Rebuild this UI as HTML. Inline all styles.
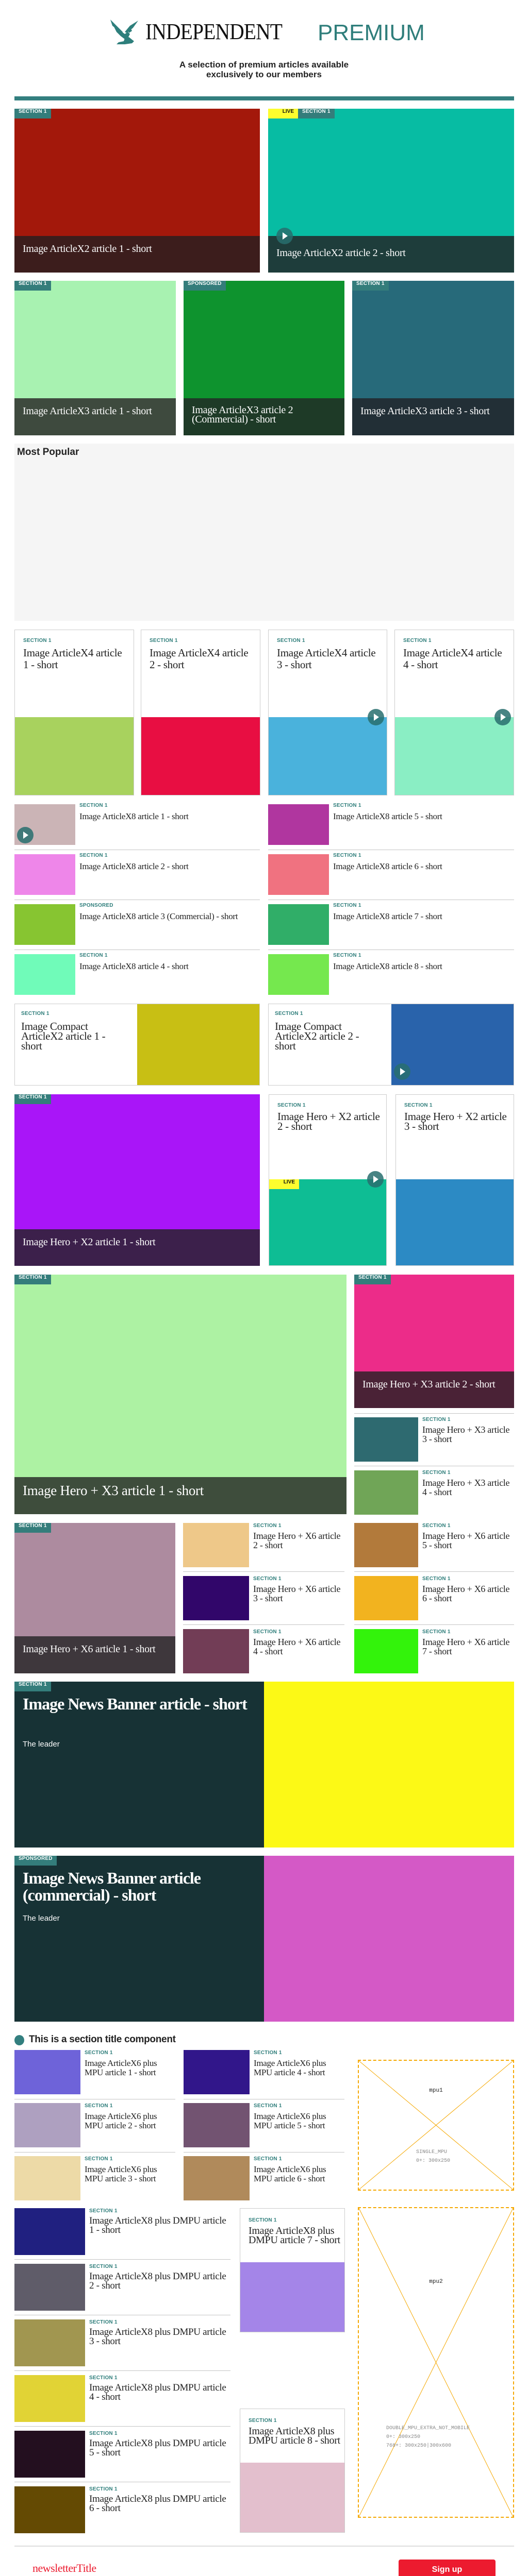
<!DOCTYPE html>
<html><head><meta charset="utf-8">
<style>
*{margin:0;padding:0;box-sizing:border-box}
html{width:1024px;height:5128px;overflow:hidden}
body{width:1024px;height:5128px;position:relative;background:#fff;overflow:hidden;font-family:"Liberation Serif",serif}
.a{position:absolute}
.chip{position:absolute;left:0;top:0;height:19px;line-height:19px;padding:0 8px;background:#347d7b;color:#fff;font:bold 10px "Liberation Sans Narrow","Liberation Sans",sans-serif;letter-spacing:.2px}
.live{position:absolute;left:0;top:0;height:19px;line-height:19px;width:58px;padding-right:8px;text-align:right;background:#fdfd2e;color:#111;font:bold 10px "Liberation Sans Narrow","Liberation Sans",sans-serif}
.cap{position:absolute;left:0;right:0;bottom:0;color:#fff;font-size:20px;line-height:22px;padding:14px 16px;letter-spacing:-.3px;overflow:hidden}
.lbl{color:#2f7e7b;font:bold 10px "Liberation Sans Narrow","Liberation Sans",sans-serif;letter-spacing:.2px}
.t{color:#222;letter-spacing:-.3px}
.bx{border:1px solid #ccc;background:#fff;overflow:hidden}
.sep{position:absolute;height:1px;background:#c4c4c4}
.play{position:absolute;width:32px;height:32px;border-radius:50%;background:rgba(40,110,110,.85)}
.play:after{content:"";position:absolute;left:12px;top:9px;border-left:10px solid #fff;border-top:7px solid transparent;border-bottom:7px solid transparent}
.mono{font-family:"Liberation Mono",monospace;color:#888;font-size:10px}
</style></head><body>

<!-- header -->
<svg class="a" style="left:212px;top:36px" width="58" height="52" viewBox="0 0 58 52">
<g fill="#2e7f7c">
<path d="M2 2 L18 18 L26 26 L24 30 L16 22 L6 14 Z"/>
<path d="M56 4 L46 18 L34 28 L30 26 L40 14 Z"/>
<path d="M6 10 L22 24 L30 30 L36 26 L40 30 L36 38 L30 40 L22 34 L14 26 Z"/>
<path d="M30 38 L38 36 L48 44 L44 48 L30 50 L14 50 L18 46 L28 44 Z"/>
<path d="M36 22 L42 20 L44 24 L38 28 Z"/>
</g></svg>
<div class="a" style="left:282px;top:37px;font-size:44px;line-height:50px;color:#111;transform:scaleX(.9);transform-origin:left;letter-spacing:-1px">INDEPENDENT</div>
<div class="a" style="left:616px;top:39px;font:44px/50px 'Liberation Sans Narrow','Liberation Sans',sans-serif;color:#2f7e7b">PREMIUM</div>
<div class="a" style="left:0;width:1024px;top:116px;text-align:center;font:bold 17px/19px 'Liberation Sans Narrow','Liberation Sans',sans-serif;color:#222">A selection of premium articles available<br>exclusively to our members</div>
<div class="a" style="left:28px;top:187px;width:969px;height:8px;background:#337f7f"></div>

<!-- row1 X2 -->
<div class="a" style="left:28px;top:211px;width:476px;height:318px;background:#a3180b"><div class="chip">SECTION 1</div><div class="cap" style="top:247px;background:#3c1d1c">Image ArticleX2 article 1 - short</div></div>
<div class="a" style="left:520px;top:211px;width:477px;height:318px;background:#07bca3"><div class="live">LIVE</div><div class="chip" style="left:58px">SECTION 1</div><div class="cap" style="top:247px;background:#1e3d3b;padding-top:22px">Image ArticleX2 article 2 - short</div><div class="play" style="left:16px;top:231px"></div></div>

<!-- row2 X3 -->
<div class="a" style="left:28px;top:545px;width:313px;height:300px;background:#a8f2b1"><div class="chip">SECTION 1</div><div class="cap" style="top:228px;background:#3e4a3e">Image ArticleX3 article 1 - short</div></div>
<div class="a" style="left:356px;top:545px;width:312px;height:300px;background:#0e932e"><div class="chip">SPONSORED</div><div class="cap" style="top:228px;background:#1e3a27;line-height:18px">Image ArticleX3 article 2 (Commercial) - short</div></div>
<div class="a" style="left:683px;top:545px;width:314px;height:300px;background:#276a7a"><div class="chip">SECTION 1</div><div class="cap" style="top:228px;background:#222f36">Image ArticleX3 article 3 - short</div></div>

<!-- most popular -->
<div class="a" style="left:28px;top:861px;width:969px;height:344px;background:#f5f5f5"><div class="a" style="left:5px;top:5px;font:bold 19px/24px 'Liberation Sans',sans-serif;color:#222">Most Popular</div></div>

<!-- X4 -->
<div class="a bx" style="left:28px;top:1222px;width:232px;height:322px"><div class="a lbl" style="left:16px;top:15px">SECTION 1</div><div class="a t" style="left:16px;top:33px;font-size:21px;line-height:23px;width:200px">Image ArticleX4 article 1 - short</div><div class="a" style="left:0;right:0;top:169px;bottom:0;background:#a8d25e"></div></div>
<div class="a bx" style="left:273px;top:1222px;width:232px;height:322px"><div class="a lbl" style="left:16px;top:15px">SECTION 1</div><div class="a t" style="left:16px;top:33px;font-size:21px;line-height:23px;width:200px">Image ArticleX4 article 2 - short</div><div class="a" style="left:0;right:0;top:169px;bottom:0;background:#e80e42"></div></div>
<div class="a bx" style="left:520px;top:1222px;width:231px;height:322px;overflow:visible"><div class="a lbl" style="left:16px;top:15px">SECTION 1</div><div class="a t" style="left:16px;top:33px;font-size:21px;line-height:23px;width:200px">Image ArticleX4 article 3 - short</div><div class="a" style="left:0;right:0;top:169px;bottom:0;background:#4ab2dc"></div><div class="play" style="left:192px;top:153px"></div></div>
<div class="a bx" style="left:765px;top:1222px;width:232px;height:322px;overflow:visible"><div class="a lbl" style="left:16px;top:15px">SECTION 1</div><div class="a t" style="left:16px;top:33px;font-size:21px;line-height:23px;width:200px">Image ArticleX4 article 4 - short</div><div class="a" style="left:0;right:0;top:169px;bottom:0;background:#8aeec4"></div><div class="play" style="left:193px;top:153px"></div></div>

<!-- X8 -->
<div class="a" style="left:28px;top:1561px;width:118px;height:79px;background:#cbb4b6"><div class="play" style="left:5px;top:44px"></div></div>
<div class="a lbl" style="left:154px;top:1558px">SECTION 1</div><div class="a t" style="left:154px;top:1575px;font-size:17px;line-height:19px;width:330px">Image ArticleX8 article 1 - short</div>
<div class="sep" style="left:28px;top:1649px;width:476px"></div>
<div class="a" style="left:28px;top:1658px;width:118px;height:79px;background:#ee86e9"></div>
<div class="a lbl" style="left:154px;top:1655px">SECTION 1</div><div class="a t" style="left:154px;top:1672px;font-size:17px;line-height:19px;width:330px">Image ArticleX8 article 2 - short</div>
<div class="sep" style="left:28px;top:1746px;width:476px"></div>
<div class="a" style="left:28px;top:1755px;width:118px;height:79px;background:#87c531"></div>
<div class="a lbl" style="left:154px;top:1752px">SPONSORED</div><div class="a t" style="left:154px;top:1769px;font-size:17px;line-height:19px;width:330px">Image ArticleX8 article 3 (Commercial) - short</div>
<div class="sep" style="left:28px;top:1843px;width:476px"></div>
<div class="a" style="left:28px;top:1852px;width:118px;height:79px;background:#70fbb9"></div>
<div class="a lbl" style="left:154px;top:1849px">SECTION 1</div><div class="a t" style="left:154px;top:1866px;font-size:17px;line-height:19px;width:330px">Image ArticleX8 article 4 - short</div>

<div class="a" style="left:520px;top:1561px;width:118px;height:79px;background:#b0369f"></div>
<div class="a lbl" style="left:646px;top:1558px">SECTION 1</div><div class="a t" style="left:646px;top:1575px;font-size:17px;line-height:19px;width:330px">Image ArticleX8 article 5 - short</div>
<div class="sep" style="left:520px;top:1649px;width:477px"></div>
<div class="a" style="left:520px;top:1658px;width:118px;height:79px;background:#f07280"></div>
<div class="a lbl" style="left:646px;top:1655px">SECTION 1</div><div class="a t" style="left:646px;top:1672px;font-size:17px;line-height:19px;width:330px">Image ArticleX8 article 6 - short</div>
<div class="sep" style="left:520px;top:1746px;width:477px"></div>
<div class="a" style="left:520px;top:1755px;width:118px;height:79px;background:#30ae68"></div>
<div class="a lbl" style="left:646px;top:1752px">SECTION 1</div><div class="a t" style="left:646px;top:1769px;font-size:17px;line-height:19px;width:330px">Image ArticleX8 article 7 - short</div>
<div class="sep" style="left:520px;top:1843px;width:477px"></div>
<div class="a" style="left:520px;top:1852px;width:118px;height:79px;background:#75e84e"></div>
<div class="a lbl" style="left:646px;top:1849px">SECTION 1</div><div class="a t" style="left:646px;top:1866px;font-size:17px;line-height:19px;width:330px">Image ArticleX8 article 8 - short</div>

<!-- compact -->
<div class="a bx" style="left:28px;top:1948px;width:476px;height:159px"><div class="a lbl" style="left:12px;top:13px">SECTION 1</div><div class="a t" style="left:12px;top:34px;font-size:21px;line-height:19px;width:200px">Image Compact ArticleX2 article 1 - short</div><div class="a" style="left:237px;right:0;top:0;bottom:0;background:#c8bf14"></div></div>
<div class="a bx" style="left:520px;top:1948px;width:477px;height:159px"><div class="a lbl" style="left:12px;top:13px">SECTION 1</div><div class="a t" style="left:12px;top:34px;font-size:21px;line-height:19px;width:200px">Image Compact ArticleX2 article 2 - short</div><div class="a" style="left:238px;right:0;top:0;bottom:0;background:#2963ab"></div><div class="play" style="left:243px;top:115px"></div></div>

<!-- hero X2 -->
<div class="a" style="left:28px;top:2124px;width:476px;height:333px;background:#a915f8"><div class="chip">SECTION 1</div><div class="cap" style="top:262px;background:#3c204b">Image Hero + X2 article 1 - short</div></div>
<div class="a bx" style="left:521px;top:2124px;width:229px;height:333px;overflow:visible"><div class="a lbl" style="left:16px;top:15px">SECTION 1</div><div class="a t" style="left:16px;top:33px;font-size:21px;line-height:19px;width:205px">Image Hero + X2 article 2 - short</div><div class="a" style="left:0;right:0;top:164px;bottom:0;background:#0ebd94"><div class="live" style="width:58px">LIVE</div></div><div class="play" style="left:190px;top:148px"></div></div>
<div class="a bx" style="left:767px;top:2124px;width:230px;height:333px"><div class="a lbl" style="left:16px;top:15px">SECTION 1</div><div class="a t" style="left:16px;top:33px;font-size:21px;line-height:19px;width:205px">Image Hero + X2 article 3 - short</div><div class="a" style="left:0;right:0;top:164px;bottom:0;background:#2c8ac4"></div></div>

<!-- hero X3 -->
<div class="a" style="left:28px;top:2474px;width:644px;height:465px;background:#adf2a3"><div class="chip">SECTION 1</div><div class="cap" style="top:393px;background:#3e4d3c;font-size:27px;line-height:30px;padding-top:11px">Image Hero + X3 article 1 - short</div></div>
<div class="a" style="left:687px;top:2474px;width:310px;height:259px;background:#ec2c89"><div class="chip">SECTION 1</div><div class="cap" style="top:188px;background:#4a2236">Image Hero + X3 article 2 - short</div></div>
<div class="sep" style="left:687px;top:2743px;width:310px"></div>
<div class="a" style="left:687px;top:2751px;width:124px;height:86px;background:#2e6a70"></div>
<div class="a lbl" style="left:819px;top:2750px">SECTION 1</div><div class="a t" style="left:819px;top:2766px;font-size:18px;line-height:18px;width:178px">Image Hero + X3 article 3 - short</div>
<div class="sep" style="left:687px;top:2845px;width:310px"></div>
<div class="a" style="left:687px;top:2854px;width:124px;height:86px;background:#70a557"></div>
<div class="a lbl" style="left:819px;top:2853px">SECTION 1</div><div class="a t" style="left:819px;top:2869px;font-size:18px;line-height:18px;width:178px">Image Hero + X3 article 4 - short</div>

<!-- X6 -->
<div class="a" style="left:28px;top:2956px;width:312px;height:292px;background:#ad8b9f"><div class="chip">SECTION 1</div><div class="cap" style="top:220px;background:#3e373c">Image Hero + X6 article 1 - short</div></div>
<div class="a" style="left:355px;top:2956px;width:128px;height:86px;background:#eec889"></div>
<div class="a lbl" style="left:491px;top:2956px">SECTION 1</div><div class="a t" style="left:491px;top:2972px;font-size:18px;line-height:18px;width:178px">Image Hero + X6 article 2 - short</div>
<div class="sep" style="left:355px;top:3050px;width:313px"></div>
<div class="a" style="left:355px;top:3059px;width:128px;height:86px;background:#31066a"></div>
<div class="a lbl" style="left:491px;top:3059px">SECTION 1</div><div class="a t" style="left:491px;top:3075px;font-size:18px;line-height:18px;width:178px">Image Hero + X6 article 3 - short</div>
<div class="sep" style="left:355px;top:3153px;width:313px"></div>
<div class="a" style="left:355px;top:3162px;width:128px;height:86px;background:#723d56"></div>
<div class="a lbl" style="left:491px;top:3162px">SECTION 1</div><div class="a t" style="left:491px;top:3178px;font-size:18px;line-height:18px;width:178px">Image Hero + X6 article 4 - short</div>

<div class="a" style="left:687px;top:2956px;width:124px;height:86px;background:#b27a3b"></div>
<div class="a lbl" style="left:819px;top:2956px">SECTION 1</div><div class="a t" style="left:819px;top:2972px;font-size:18px;line-height:18px;width:178px">Image Hero + X6 article 5 - short</div>
<div class="sep" style="left:687px;top:3050px;width:310px"></div>
<div class="a" style="left:687px;top:3059px;width:124px;height:86px;background:#f2b31f"></div>
<div class="a lbl" style="left:819px;top:3059px">SECTION 1</div><div class="a t" style="left:819px;top:3075px;font-size:18px;line-height:18px;width:178px">Image Hero + X6 article 6 - short</div>
<div class="sep" style="left:687px;top:3153px;width:310px"></div>
<div class="a" style="left:687px;top:3162px;width:124px;height:86px;background:#33f30b"></div>
<div class="a lbl" style="left:819px;top:3162px">SECTION 1</div><div class="a t" style="left:819px;top:3178px;font-size:18px;line-height:18px;width:178px">Image Hero + X6 article 7 - short</div>

<!-- news banners -->
<div class="a" style="left:28px;top:3264px;width:484px;height:322px;background:#173235"><div class="chip">SECTION 1</div><div class="a" style="left:16px;top:27px;width:440px;color:#fff;font:bold 32px/33px 'Liberation Serif',serif;letter-spacing:-1px">Image News Banner article - short</div><div class="a" style="left:16px;top:113px;color:#fff;font:15px 'Liberation Sans Narrow','Liberation Sans',sans-serif">The leader</div></div>
<div class="a" style="left:512px;top:3264px;width:485px;height:322px;background:#fcf916"></div>
<div class="a" style="left:28px;top:3602px;width:484px;height:322px;background:#173235"><div class="chip">SPONSORED</div><div class="a" style="left:16px;top:27px;width:440px;color:#fff;font:bold 32px/33px 'Liberation Serif',serif;letter-spacing:-1px">Image News Banner article (commercial) - short</div><div class="a" style="left:16px;top:113px;color:#fff;font:15px 'Liberation Sans Narrow','Liberation Sans',sans-serif">The leader</div></div>
<div class="a" style="left:512px;top:3602px;width:485px;height:322px;background:#d459c6"></div>

<!-- section title -->
<div class="a" style="left:28px;top:3950px;width:19px;height:20px;border-radius:50%;background:#337f7f"></div>
<div class="a" style="left:56px;top:3947px;font:bold 19px/24px 'Liberation Sans Narrow','Liberation Sans',sans-serif;color:#222;letter-spacing:-.3px">This is a section title component</div>

<!-- X6 + MPU -->
<div class="a" style="left:28px;top:3979px;width:128px;height:86px;background:#6e63d9"></div>
<div class="a lbl" style="left:164px;top:3979px">SECTION 1</div><div class="a t" style="left:164px;top:3996px;font-size:17px;line-height:18px;width:170px">Image ArticleX6 plus MPU article 1 - short</div>
<div class="sep" style="left:28px;top:4074px;width:312px"></div>
<div class="a" style="left:28px;top:4082px;width:128px;height:86px;background:#aea0c0"></div>
<div class="a lbl" style="left:164px;top:4082px">SECTION 1</div><div class="a t" style="left:164px;top:4099px;font-size:17px;line-height:18px;width:170px">Image ArticleX6 plus MPU article 2 - short</div>
<div class="sep" style="left:28px;top:4177px;width:312px"></div>
<div class="a" style="left:28px;top:4185px;width:128px;height:86px;background:#eddaa7"></div>
<div class="a lbl" style="left:164px;top:4185px">SECTION 1</div><div class="a t" style="left:164px;top:4202px;font-size:17px;line-height:18px;width:170px">Image ArticleX6 plus MPU article 3 - short</div>

<div class="a" style="left:356px;top:3979px;width:128px;height:86px;background:#31168a"></div>
<div class="a lbl" style="left:492px;top:3979px">SECTION 1</div><div class="a t" style="left:492px;top:3996px;font-size:17px;line-height:18px;width:170px">Image ArticleX6 plus MPU article 4 - short</div>
<div class="sep" style="left:356px;top:4074px;width:312px"></div>
<div class="a" style="left:356px;top:4082px;width:128px;height:86px;background:#725371"></div>
<div class="a lbl" style="left:492px;top:4082px">SECTION 1</div><div class="a t" style="left:492px;top:4099px;font-size:17px;line-height:18px;width:170px">Image ArticleX6 plus MPU article 5 - short</div>
<div class="sep" style="left:356px;top:4177px;width:312px"></div>
<div class="a" style="left:356px;top:4185px;width:128px;height:86px;background:#b08a5b"></div>
<div class="a lbl" style="left:492px;top:4185px">SECTION 1</div><div class="a t" style="left:492px;top:4202px;font-size:17px;line-height:18px;width:170px">Image ArticleX6 plus MPU article 6 - short</div>

<div class="a" style="left:694px;top:3998px;width:303px;height:254px;border:2px dashed #f5a800;overflow:hidden">
<svg class="a" style="left:0;top:0" width="299" height="250"><line x1="0" y1="0" x2="299" y2="250" stroke="#f5a800" stroke-width="1"/><line x1="299" y1="0" x2="0" y2="250" stroke="#f5a800" stroke-width="1"/></svg>
<div class="a mono" style="left:0;width:299px;top:52px;text-align:center;color:#222;font-size:11px">mpu1</div>
<div class="a mono" style="left:111px;top:169px;line-height:17px">SINGLE_MPU<br>0+: 300x250</div>
</div>

<!-- DMPU -->
<div class="a" style="left:28px;top:4286px;width:137px;height:91px;background:#202080"></div>
<div class="a lbl" style="left:173px;top:4286px">SECTION 1</div><div class="a t" style="left:173px;top:4302px;font-size:19px;line-height:18px;width:270px">Image ArticleX8 plus DMPU article 1 - short</div>
<div class="sep" style="left:28px;top:4385px;width:419px"></div>
<div class="a" style="left:28px;top:4394px;width:137px;height:91px;background:#5f5c69"></div>
<div class="a lbl" style="left:173px;top:4394px">SECTION 1</div><div class="a t" style="left:173px;top:4410px;font-size:19px;line-height:18px;width:270px">Image ArticleX8 plus DMPU article 2 - short</div>
<div class="sep" style="left:28px;top:4493px;width:419px"></div>
<div class="a" style="left:28px;top:4502px;width:137px;height:91px;background:#a19650"></div>
<div class="a lbl" style="left:173px;top:4502px">SECTION 1</div><div class="a t" style="left:173px;top:4518px;font-size:19px;line-height:18px;width:270px">Image ArticleX8 plus DMPU article 3 - short</div>
<div class="sep" style="left:28px;top:4601px;width:419px"></div>
<div class="a" style="left:28px;top:4610px;width:137px;height:91px;background:#e1d335"></div>
<div class="a lbl" style="left:173px;top:4610px">SECTION 1</div><div class="a t" style="left:173px;top:4626px;font-size:19px;line-height:18px;width:270px">Image ArticleX8 plus DMPU article 4 - short</div>
<div class="sep" style="left:28px;top:4709px;width:419px"></div>
<div class="a" style="left:28px;top:4718px;width:137px;height:91px;background:#230f1f"></div>
<div class="a lbl" style="left:173px;top:4718px">SECTION 1</div><div class="a t" style="left:173px;top:4734px;font-size:19px;line-height:18px;width:270px">Image ArticleX8 plus DMPU article 5 - short</div>
<div class="sep" style="left:28px;top:4817px;width:419px"></div>
<div class="a" style="left:28px;top:4826px;width:137px;height:91px;background:#644a03"></div>
<div class="a lbl" style="left:173px;top:4826px">SECTION 1</div><div class="a t" style="left:173px;top:4842px;font-size:19px;line-height:18px;width:270px">Image ArticleX8 plus DMPU article 6 - short</div>

<div class="a bx" style="left:465px;top:4286px;width:204px;height:241px"><div class="a lbl" style="left:16px;top:17px">SECTION 1</div><div class="a t" style="left:16px;top:34px;font-size:20px;line-height:18px;width:180px">Image ArticleX8 plus DMPU article 7 - short</div><div class="a" style="left:0;right:0;top:104px;bottom:0;background:#a485e8"></div></div>
<div class="a bx" style="left:465px;top:4675px;width:204px;height:241px"><div class="a lbl" style="left:16px;top:17px">SECTION 1</div><div class="a t" style="left:16px;top:34px;font-size:20px;line-height:18px;width:180px">Image ArticleX8 plus DMPU article 8 - short</div><div class="a" style="left:0;right:0;top:104px;bottom:0;background:#e3bfcd"></div></div>

<div class="a" style="left:694px;top:4284px;width:303px;height:603px;border:2px dashed #f5a800;overflow:hidden">
<svg class="a" style="left:0;top:0" width="299" height="599"><line x1="0" y1="0" x2="299" y2="599" stroke="#f5a800" stroke-width="1"/><line x1="299" y1="0" x2="0" y2="599" stroke="#f5a800" stroke-width="1"/></svg>
<div class="a mono" style="left:0;width:299px;top:137px;text-align:center;color:#222;font-size:11px">mpu2</div>
<div class="a mono" style="left:53px;top:419px;line-height:17px">DOUBLE_MPU_EXTRA_NOT_MOBILE<br>0+: 300x250<br>768+: 300x250|300x600</div>
</div>

<!-- newsletter -->
<div class="a" style="left:28px;top:4941px;width:969px;height:2px;background:#ddd"></div>
<div class="a" style="left:63px;top:4973px;color:#ec1b2f;font-size:22px;line-height:24px;letter-spacing:-.5px">newsletterTitle</div>
<div class="a" style="left:63px;top:4997px;color:#222;font-size:22px;line-height:24px;letter-spacing:-.5px">newsletterDescription</div>
<div class="a" style="left:773px;top:4968px;width:188px;height:40px;border-radius:4px;background:#ec1b2f;color:#fff;text-align:center;font:bold 16px/40px 'Liberation Sans Narrow','Liberation Sans',sans-serif">Sign up</div>
<div class="a" style="left:740px;top:5013px;width:221px;text-align:right;font:11px/14px 'Liberation Sans Narrow','Liberation Sans',sans-serif;color:#222">Already have an account? <span style="color:#ec1b2f;text-decoration:underline">Log in here</span></div>
<div class="a" style="left:28px;top:5057px;width:969px;height:2px;background:#ddd"></div>
<div class="a" style="left:861px;top:5077px;width:100px;text-align:right;font:bold 16px/20px 'Liberation Sans Narrow','Liberation Sans',sans-serif;color:#2f7e7b;text-decoration:underline">MORE</div>

</body></html>
